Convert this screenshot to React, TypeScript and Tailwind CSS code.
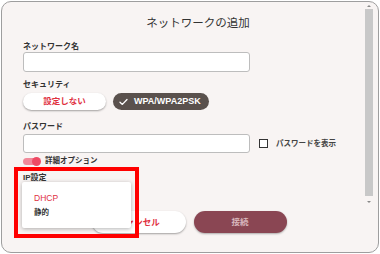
export default function App() {
  return (
    <div
      className="w-[380px] h-[254px] bg-white p-px"
      style={{ fontFamily: '"Liberation Sans", "Noto Sans CJK JP", sans-serif' }}
    >
      <div className="relative h-[252px] w-[378px] rounded-[10px] border border-[#9e9e9e] bg-[#f8f4f3] flex flex-col">
        <div className="flex h-[205px]">
          <div className="flex-1 pl-[21px]">
            <div className="pt-[14px] h-[28px] text-center text-[11.5px] leading-[14px] text-[#333] pl-[8px]">
              ネットワークの追加
            </div>

            <div className="mt-[12px] h-[10px] text-[8px] leading-[10px] font-bold text-[#333]">ネットワーク名</div>
            <div className="h-[20px] w-[227px] rounded-[3px] border border-[#bdbdbd] bg-white" />

            <div className="mt-[8px] h-[10px] text-[8px] leading-[10px] font-bold text-[#333]">セキュリティ</div>
            <div className="mt-[3px] flex gap-[7px]">
              <div className="h-[17px] w-[83px] rounded-full bg-white shadow-[0_1px_2px_rgba(0,0,0,0.35)] flex items-center justify-center text-[8.5px] font-bold text-[#e0303f]">
                設定しない
              </div>
              <div className="h-[17px] w-[96px] rounded-full bg-[#5a514d] flex items-center pl-[6px] gap-[6px] text-[9px] font-bold text-white">
                <svg width="9" height="8" viewBox="0 0 9 8" fill="none">
                  <path d="M1 4.2 L3.4 6.4 L8 1.5" stroke="white" strokeWidth="1.3" strokeLinecap="round" strokeLinejoin="round" />
                </svg>
                WPA/WPA2PSK
              </div>
            </div>

            <div className="mt-[12px] h-[10px] text-[8px] leading-[10px] font-bold text-[#333]">パスワード</div>
            <div className="mt-[2px] flex items-center">
              <div className="h-[19px] w-[227px] rounded-[3px] border border-[#bdbdbd] bg-white" />
              <div className="ml-[9px] h-[9px] w-[9px] border-[1.5px] border-[#333] bg-white" />
              <div className="ml-[8px] text-[7.5px] font-bold text-[#444]">パスワードを表示</div>
            </div>

            <div className="mt-[4px] flex items-center h-[8px]">
              <div className="relative h-[7px] w-[17px] rounded-full bg-[#f1899a]">
                <div className="absolute right-[-1px] top-[-1px] h-[9px] w-[9px] rounded-full bg-[#ee4a64]" />
              </div>
              <div className="ml-[5px] text-[7.5px] font-bold leading-[10px] text-[#333]">詳細オプション</div>
            </div>

            <div className="mt-[8px] h-[10px] text-[8px] leading-[10px] font-bold text-[#333]">IP設定</div>
          </div>

          <div className="mr-[5px] mt-[1px] w-[8px] flex flex-col items-center">
            <div className="h-[6px] flex items-center">
              <div className="w-0 h-0 border-l-[2px] border-r-[2px] border-b-[2px] border-l-transparent border-r-transparent border-b-[#888]" />
            </div>
            <div className="h-[187px] w-[8px] bg-[#c8c8c8]" />
            <div className="flex-1 flex items-center">
              <div className="w-0 h-0 border-l-[2px] border-r-[2px] border-t-[2px] border-l-transparent border-r-transparent border-t-[#888]" />
            </div>
          </div>
        </div>

        <div className="mt-[4px] flex justify-center gap-[8px] pr-[2px]">
          <div className="h-[22px] w-[94px] rounded-full bg-white shadow-[0_1px_2px_rgba(0,0,0,0.35)] flex items-center justify-center text-[8.5px] font-bold text-[#e0303f]">
            キャンセル
          </div>
          <div className="h-[22px] w-[93px] rounded-full bg-[#8a4653] shadow-[0_1px_2px_rgba(0,0,0,0.3)] flex items-center justify-center text-[8.5px] font-bold text-[#d9b7bd]">
            接続
          </div>
        </div>

        <div className="absolute left-[20px] top-[180px] h-[46px] w-[109px] rounded-[2px] bg-white shadow-[0_1px_4px_rgba(0,0,0,0.3)] pt-[9px] pl-[12px]">
          <div className="h-[14px] text-[8.5px] leading-[14px] text-[#e0303f]">DHCP</div>
          <div className="mt-[1px] h-[14px] text-[7.5px] leading-[14px] font-bold text-[#333]">静的</div>
        </div>

        <div className="absolute left-[12px] top-[165px] h-[71px] w-[125px] border-4 border-[#ff0000]" />
      </div>
    </div>
  );
}
